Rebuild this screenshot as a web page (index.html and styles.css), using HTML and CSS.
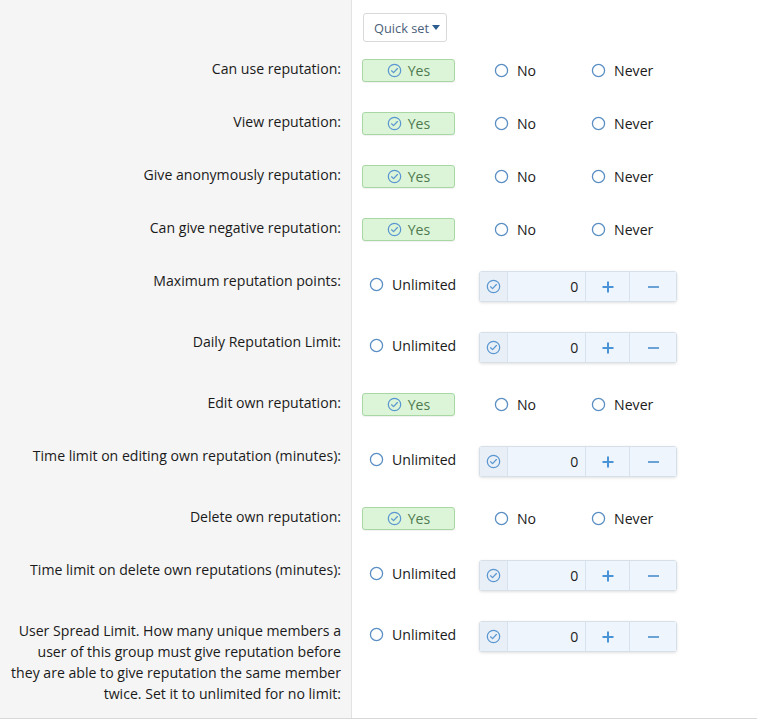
FILE: index.html
```html
<!DOCTYPE html>
<html>
<head>
<meta charset="utf-8">
<link rel="stylesheet" href="styles.css">
</head>
<body>
<svg width="0" height="0" class="defs">
  <defs>
    <symbol id="chk" viewBox="0 0 16 16">
      <circle cx="8" cy="8" r="6.6" fill="none" stroke="currentColor" stroke-width="1.3"/>
      <path d="M4.9 8.3 L7 10.3 L11.1 5.9" fill="none" stroke="currentColor" stroke-width="1.3" stroke-linecap="round" stroke-linejoin="round"/>
    </symbol>
    <symbol id="rad" viewBox="0 0 16 16">
      <circle cx="8" cy="8" r="6.5" fill="#fff" stroke="currentColor" stroke-width="1.4"/>
    </symbol>
  </defs>
</svg>
<div class="form">
  <div class="row">
    <div class="label label-top"></div>
    <div class="input input-top">
      <button class="quick">Quick set <svg class="caret" viewBox="0 0 8 5"><path d="M0 0 L8 0 L4 5 Z"/></svg></button>
    </div>
  </div>

  <div class="row">
    <div class="label">Can use reputation:</div>
    <div class="input">
      <span class="yes"><svg class="ico"><use href="#chk"/></svg>Yes</span>
      <span class="opt opt-no"><svg class="radio"><use href="#rad"/></svg>No</span>
      <span class="opt opt-never"><svg class="radio"><use href="#rad"/></svg>Never</span>
    </div>
  </div>

  <div class="row">
    <div class="label">View reputation:</div>
    <div class="input">
      <span class="yes"><svg class="ico"><use href="#chk"/></svg>Yes</span>
      <span class="opt opt-no"><svg class="radio"><use href="#rad"/></svg>No</span>
      <span class="opt opt-never"><svg class="radio"><use href="#rad"/></svg>Never</span>
    </div>
  </div>

  <div class="row">
    <div class="label">Give anonymously reputation:</div>
    <div class="input">
      <span class="yes"><svg class="ico"><use href="#chk"/></svg>Yes</span>
      <span class="opt opt-no"><svg class="radio"><use href="#rad"/></svg>No</span>
      <span class="opt opt-never"><svg class="radio"><use href="#rad"/></svg>Never</span>
    </div>
  </div>

  <div class="row">
    <div class="label">Can give negative reputation:</div>
    <div class="input">
      <span class="yes"><svg class="ico"><use href="#chk"/></svg>Yes</span>
      <span class="opt opt-no"><svg class="radio"><use href="#rad"/></svg>No</span>
      <span class="opt opt-never"><svg class="radio"><use href="#rad"/></svg>Never</span>
    </div>
  </div>

  <div class="row">
    <div class="label">Maximum reputation points:</div>
    <div class="input">
      <span class="opt opt-unl"><svg class="radio"><use href="#rad"/></svg>Unlimited</span>
      <span class="spin">
        <span class="spin-chk"><svg class="ico"><use href="#chk"/></svg></span>
        <span class="spin-val">0</span>
        <span class="spin-btn"><svg class="pm" viewBox="0 0 12 12"><path d="M6 0.5 V11.5 M0.5 6 H11.5"/></svg></span>
        <span class="spin-btn spin-last"><svg class="pm pm-minus" viewBox="0 0 12 12"><path d="M0.5 6 H11.5"/></svg></span>
      </span>
    </div>
  </div>

  <div class="row">
    <div class="label">Daily Reputation Limit:</div>
    <div class="input">
      <span class="opt opt-unl"><svg class="radio"><use href="#rad"/></svg>Unlimited</span>
      <span class="spin">
        <span class="spin-chk"><svg class="ico"><use href="#chk"/></svg></span>
        <span class="spin-val">0</span>
        <span class="spin-btn"><svg class="pm" viewBox="0 0 12 12"><path d="M6 0.5 V11.5 M0.5 6 H11.5"/></svg></span>
        <span class="spin-btn spin-last"><svg class="pm pm-minus" viewBox="0 0 12 12"><path d="M0.5 6 H11.5"/></svg></span>
      </span>
    </div>
  </div>

  <div class="row">
    <div class="label">Edit own reputation:</div>
    <div class="input">
      <span class="yes"><svg class="ico"><use href="#chk"/></svg>Yes</span>
      <span class="opt opt-no"><svg class="radio"><use href="#rad"/></svg>No</span>
      <span class="opt opt-never"><svg class="radio"><use href="#rad"/></svg>Never</span>
    </div>
  </div>

  <div class="row">
    <div class="label">Time limit on editing own reputation (minutes):</div>
    <div class="input">
      <span class="opt opt-unl"><svg class="radio"><use href="#rad"/></svg>Unlimited</span>
      <span class="spin">
        <span class="spin-chk"><svg class="ico"><use href="#chk"/></svg></span>
        <span class="spin-val">0</span>
        <span class="spin-btn"><svg class="pm" viewBox="0 0 12 12"><path d="M6 0.5 V11.5 M0.5 6 H11.5"/></svg></span>
        <span class="spin-btn spin-last"><svg class="pm pm-minus" viewBox="0 0 12 12"><path d="M0.5 6 H11.5"/></svg></span>
      </span>
    </div>
  </div>

  <div class="row">
    <div class="label">Delete own reputation:</div>
    <div class="input">
      <span class="yes"><svg class="ico"><use href="#chk"/></svg>Yes</span>
      <span class="opt opt-no"><svg class="radio"><use href="#rad"/></svg>No</span>
      <span class="opt opt-never"><svg class="radio"><use href="#rad"/></svg>Never</span>
    </div>
  </div>

  <div class="row">
    <div class="label">Time limit on delete own reputations (minutes):</div>
    <div class="input">
      <span class="opt opt-unl"><svg class="radio"><use href="#rad"/></svg>Unlimited</span>
      <span class="spin">
        <span class="spin-chk"><svg class="ico"><use href="#chk"/></svg></span>
        <span class="spin-val">0</span>
        <span class="spin-btn"><svg class="pm" viewBox="0 0 12 12"><path d="M6 0.5 V11.5 M0.5 6 H11.5"/></svg></span>
        <span class="spin-btn spin-last"><svg class="pm pm-minus" viewBox="0 0 12 12"><path d="M0.5 6 H11.5"/></svg></span>
      </span>
    </div>
  </div>

  <div class="row row-last">
    <div class="label">User Spread Limit. How many unique members a user of this group must give reputation before they are able to give reputation the same member twice. Set it to unlimited for no limit:</div>
    <div class="input">
      <span class="opt opt-unl"><svg class="radio"><use href="#rad"/></svg>Unlimited</span>
      <span class="spin">
        <span class="spin-chk"><svg class="ico"><use href="#chk"/></svg></span>
        <span class="spin-val">0</span>
        <span class="spin-btn"><svg class="pm" viewBox="0 0 12 12"><path d="M6 0.5 V11.5 M0.5 6 H11.5"/></svg></span>
        <span class="spin-btn spin-last"><svg class="pm pm-minus" viewBox="0 0 12 12"><path d="M0.5 6 H11.5"/></svg></span>
      </span>
    </div>
  </div>
</div>
</body>
</html>
```

FILE: styles.css
```css
html, body {
  margin: 0;
  padding: 0;
  background: #fff;
}
body {
  font-family: "Open Sans", "Noto Sans", sans-serif;
  font-size: 14.1px;
  line-height: 21px;
  color: #1a1a1a;
}
.defs {
  position: absolute;
  width: 0;
  height: 0;
}
.form {
  border-bottom: 1px solid #d8d8d8;
}
.row {
  display: flex;
}
.label {
  width: 352px;
  box-sizing: border-box;
  flex: none;
  background: #f5f5f5;
  border-right: 1px solid #e2e2e2;
  padding: 14px 10px 15px 9px;
  text-align: right;
}
.label-top {
  padding: 0;
}
.input {
  flex: 1;
  padding: 15px 10px 15px 10px;
  display: flex;
  align-items: flex-start;
}
.input-top {
  padding: 13px 10px 2px 11px;
}
.quick {
  height: 29px;
  width: 84px;
  box-sizing: border-box;
  border: 1px solid #d9d9d9;
  border-radius: 3px;
  background: #fff;
  font-family: inherit;
  font-size: 12.8px;
  color: #4b6079;
  padding: 0 0 0 10px;
  display: flex;
  align-items: center;
  gap: 3px;
}
.caret {
  width: 8px;
  height: 5px;
  fill: #2b5d8f;
}
.yes {
  width: 93px;
  height: 23px;
  box-sizing: border-box;
  border: 1px solid #a8d7a3;
  border-radius: 3px;
  background: #dcf5d9;
  color: #4f7a4f;
  display: flex;
  align-items: center;
  justify-content: center;
  gap: 6px;
  box-shadow: 0 1px 1px rgba(0,0,0,0.06);
}
.ico {
  width: 15px;
  height: 15px;
  color: #5a96d0;
}
.opt {
  display: flex;
  align-items: center;
  height: 23px;
  gap: 8px;
}
.radio {
  width: 15px;
  height: 15px;
  color: #5b8fc4;
}
.opt-no {
  margin-left: 39px;
}
.opt-never {
  margin-left: 55px;
}
.opt-unl {
  margin-left: 7px;
  height: 21px;
  margin-top: 3px;
}
.spin {
  margin-left: 23px;
  display: flex;
  height: 31px;
  box-sizing: border-box;
  border: 1px solid #d7dfe8;
  border-radius: 3px;
  background: #edf5fd;
  box-shadow: 0 1px 3px rgba(0,0,0,0.12);
}
.spin > span {
  display: flex;
  align-items: center;
  justify-content: center;
  border-right: 1px solid #d8e2ec;
}
.spin-chk {
  width: 27px;
  background: #e8eff7;
}
.spin-val {
  width: 78px;
  box-sizing: border-box;
  justify-content: flex-end !important;
  padding-right: 7px;
  color: #1e1e1e;
  background: #eef5fd;
}
.spin-btn {
  width: 43px;
  background: #eef5fc;
}
.spin > .spin-last {
  width: 46px;
  border-right: none;
}
.pm {
  width: 12px;
  height: 12px;
  fill: none;
  stroke: #4a93d6;
  stroke-width: 2;
}
.pm-minus {
  width: 13px;
  stroke: #6aa2d6;
}
.row-last .label {
  padding-bottom: 14px;
}
```
